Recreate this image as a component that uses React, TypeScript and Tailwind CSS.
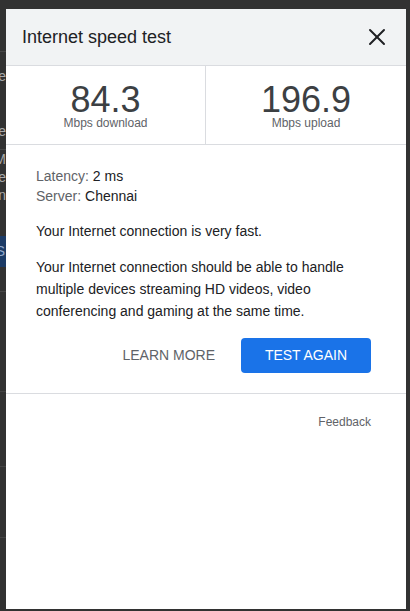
import { X } from 'lucide-react';

const font = { fontFamily: '"Liberation Sans", Arial, sans-serif' };

function PageBehind() {
  // the page under the scrim; only its right edge peeks out next to the dialog
  return (
    <div className="h-full w-[6px] overflow-hidden">
      <div className="-ml-[194px] flex w-[200px] flex-col text-right text-[14px] text-[#a9a9a9]">
        <div className="h-[52px] border-b border-[#474747]" />
        <div className="h-[20px] pt-[14px] leading-[20px]">Compare</div>
        <div className="h-[50px]" />
        <div className="leading-[18px]">There</div>
        <div className="h-[10px] border-b border-[#474747]" />
        <div className="leading-[18px]">WiFi M</div>
        <div className="leading-[18px]">to be fine</div>
        <div className="leading-[18px]">conn</div>
        <div className="h-[32px]" />
        <div className="h-[31px] bg-[#1c3b66] pr-[1px] leading-[31px] text-[#8fa7c9]">RUN TESTS</div>
        <div className="h-[25px] border-b border-[#474747]" />
        <div className="h-[100px] border-b border-[#444444]" />
        <div className="h-[75px] border-b border-[#444444]" />
        <div className="h-[71px] border-b border-[#444444]" />
      </div>
    </div>
  );
}

export default function App() {
  return (
    <div className="relative h-[611px] w-[410px] overflow-hidden bg-[#323232]" style={font}>
      <PageBehind />

      {/* dialog */}
      <div className="absolute left-[6px] top-[9px] flex h-[600px] w-[400px] flex-col bg-white">
        <div className="flex h-[57px] items-center justify-between border-b border-[#dadce0] bg-[#f1f3f4] pl-4 pr-[15px]">
          <span className="pt-[1px] text-[18px] text-[#202124]">Internet speed test</span>
          <X size={28} strokeWidth={1.7} className="text-[#202124]" />
        </div>

        <div className="grid h-[79px] grid-cols-2 border-b border-[#dadce0]">
          <div className="flex flex-col items-center justify-center border-r border-[#dadce0] pt-[3px]">
            <span className="text-[36px] leading-[32px] text-[#3c4043]">84.3</span>
            <span className="text-[12px] leading-[14px] text-[#5f6368]">Mbps download</span>
          </div>
          <div className="flex flex-col items-center justify-center pt-[3px]">
            <span className="text-[36px] leading-[32px] text-[#3c4043]">196.9</span>
            <span className="text-[12px] leading-[14px] text-[#5f6368]">Mbps upload</span>
          </div>
        </div>

        <div className="flex flex-col px-[30px] pt-[21px] text-[14px] text-[#202124]">
          <div className="leading-[20px]">
            <span className="text-[#5f6368]">Latency: </span>2 ms
          </div>
          <div className="leading-[20px]">
            <span className="text-[#5f6368]">Server: </span>Chennai
          </div>
          <p className="mt-[15px] leading-[20px]">Your Internet connection is very fast.</p>
          <p className="mt-[15px] leading-[22px]">
            Your Internet connection should be able to handle multiple devices streaming HD videos, video
            conferencing and gaming at the same time.
          </p>

          <div className="mt-[16px] flex items-center justify-end gap-[2px] pr-[5px]">
            <button className="h-[35px] px-6 text-[14px] text-[#5f6368]">LEARN MORE</button>
            <button className="h-[35px] w-[130px] rounded-[4px] bg-[#1a73e8] text-[14px] text-white">
              TEST AGAIN
            </button>
          </div>
        </div>

        <div className="mt-[20px] border-b border-[#dadce0]" />

        <div className="flex justify-end pr-[35px] pt-[20px]">
          <span className="text-[12px] leading-[16px] text-[#5f6368]">Feedback</span>
        </div>
      </div>
    </div>
  );
}
